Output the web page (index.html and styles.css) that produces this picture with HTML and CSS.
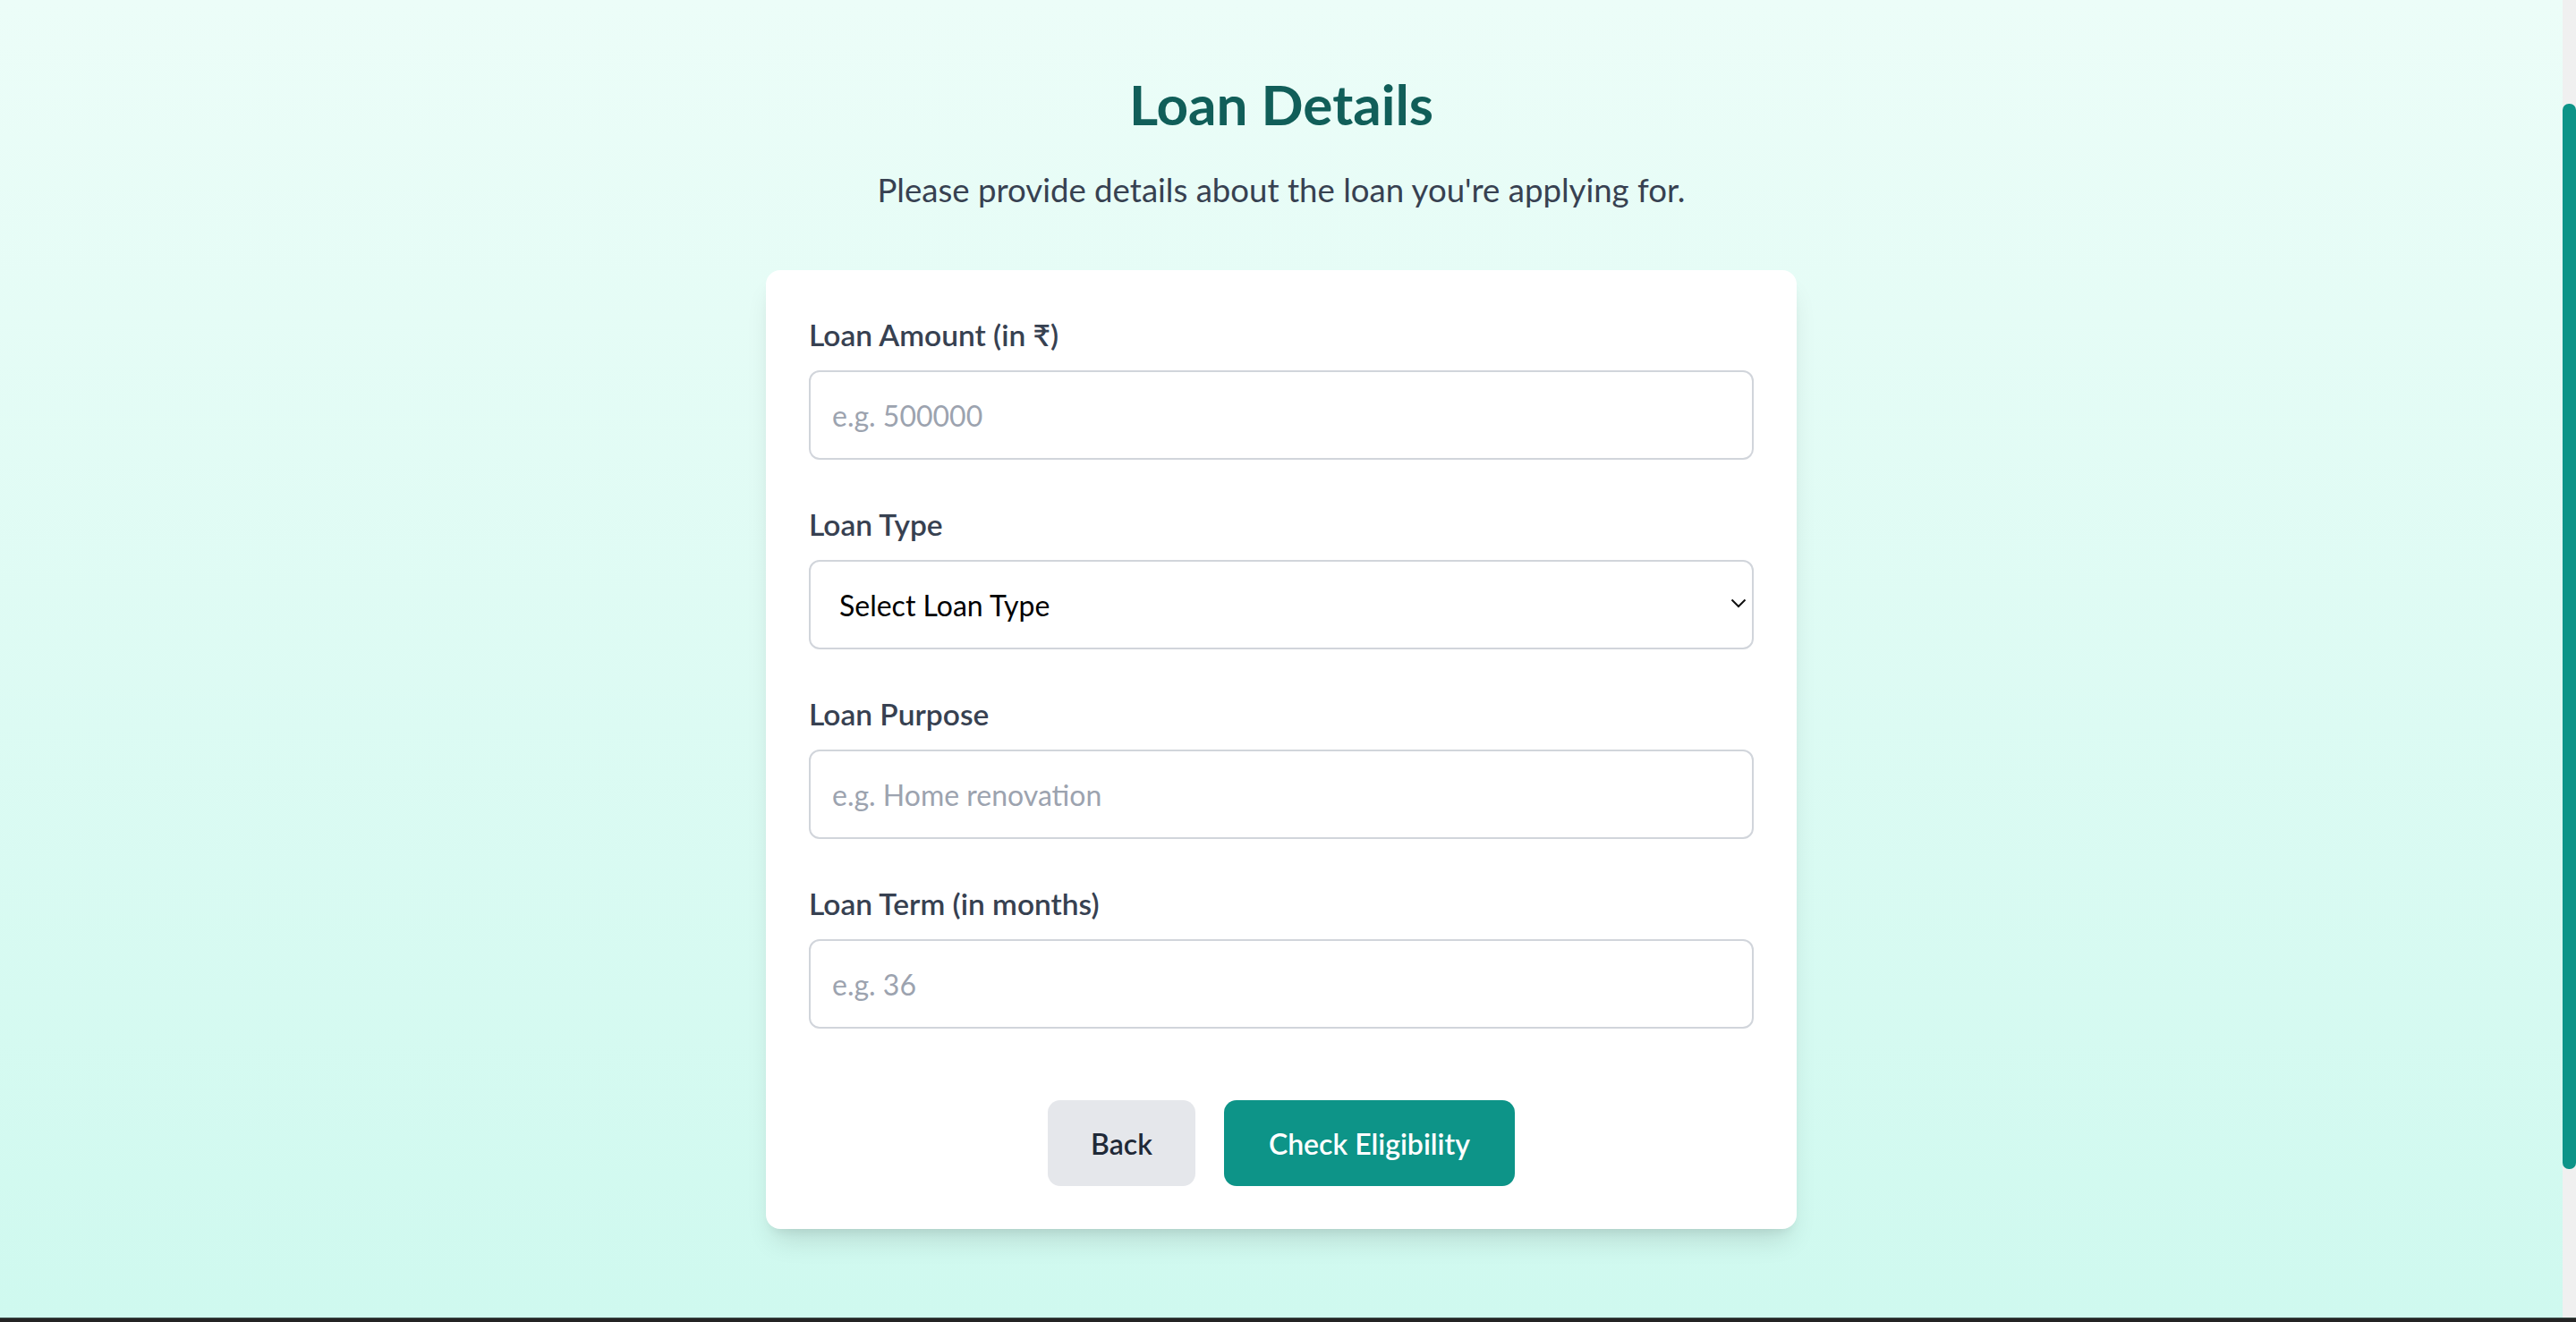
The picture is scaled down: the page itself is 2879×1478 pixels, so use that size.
FILE: index.html
```html
<!DOCTYPE html>
<html lang="en">
<head>
<meta charset="utf-8">
<title>Loan Details</title>
<link rel="stylesheet" href="styles.css">
</head>
<body>
<div class="screen">
  <main class="page">
    <h1 class="title">Loan Details</h1>
    <p class="subtitle">Please provide details about the loan you're applying for.</p>
    <form class="card">
      <div class="field">
        <label class="label" for="amount">Loan Amount (in ₹)</label>
        <input class="input" id="amount" type="text" placeholder="e.g. 500000">
      </div>
      <div class="field">
        <label class="label" for="type">Loan Type</label>
        <div class="select-wrap">
          <select class="input select" id="type">
            <option>Select Loan Type</option>
            <option>Personal Loan</option>
            <option>Home Loan</option>
            <option>Car Loan</option>
            <option>Education Loan</option>
          </select>
          <svg class="chevron" width="18" height="11" viewBox="0 0 18 11"><path d="M1.5 1.5 L9 9 L16.5 1.5" fill="none" stroke="#111" stroke-width="2"/></svg>
        </div>
      </div>
      <div class="field">
        <label class="label" for="purpose">Loan Purpose</label>
        <input class="input" id="purpose" type="text" placeholder="e.g. Home renovation">
      </div>
      <div class="field">
        <label class="label" for="term">Loan Term (in months)</label>
        <input class="input" id="term" type="text" placeholder="e.g. 36">
      </div>
      <div class="actions">
        <button type="button" class="btn btn-back">Back</button>
        <button type="button" class="btn btn-primary">Check Eligibility</button>
      </div>
    </form>
  </main>
  <div class="scrollbar"><div class="thumb"></div></div>
</div>
<div class="screen-edge"></div>
</body>
</html>
```

FILE: styles.css
```css
html, body {
  margin: 0;
  height: 100%;
  overflow: hidden;
}
body {
  font-family: Lato, "Noto Sans", "DejaVu Sans", sans-serif;
  color: #374151;
  display: flex;
  flex-direction: column;
  background: #242424;
}
.screen {
  flex: 1;
  display: flex;
  min-height: 0;
}
.page {
  flex: 1;
  min-width: 0;
  box-sizing: border-box;
  padding-top: 80px;
  display: flex;
  flex-direction: column;
  align-items: center;
  background: linear-gradient(180deg, #ecfdf8 0%, #cff9ef 100%);
  overflow: hidden;
}
.title {
  margin: 0;
  font-size: 62px;
  line-height: 72px;
  font-weight: 700;
  color: #115e59;
}
.subtitle {
  margin: 32px 0 0;
  font-size: 36.6px;
  line-height: 56px;
  color: #374151;
}
.card {
  flex: none;
  margin-top: 62px;
  width: 1152px;
  box-sizing: border-box;
  padding: 48px;
  background: #fff;
  border-radius: 16px;
  box-shadow: 0 20px 30px -8px rgba(0, 0, 0, 0.12), 0 8px 12px -6px rgba(0, 0, 0, 0.08);
  display: flex;
  flex-direction: column;
  gap: 48px;
}
.field {
  display: flex;
  flex-direction: column;
}
.label {
  font-size: 33.5px;
  line-height: 48px;
  font-weight: 600;
  color: #374151;
  margin-bottom: 16px;
}
.input {
  box-sizing: border-box;
  width: 100%;
  height: 100px;
  border: 2px solid #d1d5db;
  border-radius: 12px;
  padding: 0 24px;
  font-family: inherit;
  font-size: 32px;
  color: #111827;
  background: #fff;
  outline: none;
}
.input::placeholder {
  color: #9ca3af;
}
.select-wrap {
  position: relative;
}
.select {
  -webkit-appearance: none;
  appearance: none;
  padding-left: 32px;
  color: #000;
}
.chevron {
  position: absolute;
  right: 8px;
  top: 43px;
  pointer-events: none;
}
.actions {
  margin-top: 32px;
  display: flex;
  justify-content: center;
  gap: 32px;
}
.btn {
  height: 96px;
  padding: 0 48px;
  border: none;
  border-radius: 14px;
  font-family: inherit;
  font-size: 32px;
  font-weight: 600;
  cursor: pointer;
}
.btn-back {
  background: #e5e7eb;
  color: #1f2937;
}
.btn-primary {
  background: #0d9488;
  color: #fff;
  padding: 0 50px;
}
.scrollbar {
  flex: none;
  width: 15px;
  background: #f0f0f0;
  padding-top: 116px;
  box-sizing: border-box;
}
.thumb {
  height: 1191px;
  background: #0d9488;
  border-radius: 7px;
}
.screen-edge {
  flex: none;
  height: 5px;
  background: #242424;
  border-top: 1px solid #3d4f4b;
  box-sizing: border-box;
}
```
